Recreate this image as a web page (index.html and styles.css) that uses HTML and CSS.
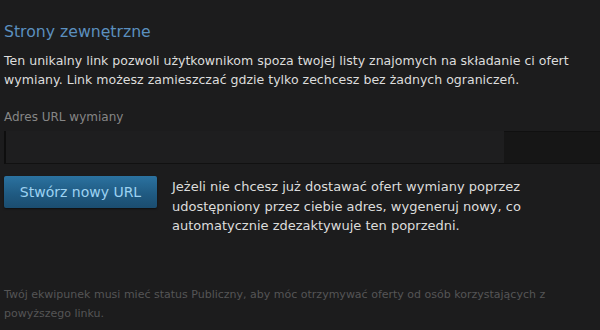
FILE: index.html
```html
<!DOCTYPE html>
<html lang="pl">
<head>
<meta charset="utf-8">
<link rel="stylesheet" href="styles.css">
</head>
<body>
<div class="panel">
  <h2 class="title">Strony zewnętrzne</h2>
  <p class="intro">Ten unikalny link pozwoli użytkownikom spoza twojej listy znajomych na składanie ci ofert wymiany. Link możesz zamieszczać gdzie tylko zechcesz bez żadnych ograniczeń.</p>
  <div class="label">Adres URL wymiany</div>
  <div class="url-field"><span class="url-input"></span><span class="url-end"></span></div>
  <div class="action-row">
    <button class="btn">Stwórz nowy URL</button>
    <p class="action-text">Jeżeli nie chcesz już dostawać ofert wymiany poprzez udostępniony przez ciebie adres, wygeneruj nowy, co automatycznie zdezaktywuje ten poprzedni.</p>
  </div>
  <p class="note">Twój ekwipunek musi mieć status Publiczny, aby móc otrzymywać oferty od osób korzystających z powyższego linku.</p>
</div>
</body>
</html>
```

FILE: styles.css
```css
html, body {
  margin: 0;
  padding: 0;
  background: #1c1c1d;
  width: 600px;
  height: 330px;
  overflow: hidden;
}
.panel {
  padding: 22px 0 0 4px;
  font-family: "DejaVu Sans", Verdana, sans-serif;
  color: #d6d6d6;
}
.title {
  margin: 0;
  font-size: 15.7px;
  font-weight: normal;
  color: #5b8fbf;
  line-height: 20px;
}
.intro {
  margin: 10px 0 0 0;
  font-size: 12.55px;
  line-height: 18.5px;
  color: #dcdcdc;
  width: 596px;
}
.label {
  margin-top: 21px;
  font-size: 12px;
  line-height: 15px;
  color: #868686;
}
.url-field {
  margin-top: 6px;
  height: 32px;
  display: flex;
  border-bottom: 1px solid #111;
  border-left: 2px solid #0e0e0e;
}
.url-input {
  flex: 1;
  background: #1e1e1f;
}
.url-end {
  width: 96px;
  background: #161616;
  border-top: 1px solid #101010;
}
.action-row {
  display: flex;
  align-items: flex-start;
  margin-top: 12px;
}
.btn {
  flex: none;
  width: 153px;
  height: 32px;
  border: none;
  border-radius: 2px;
  background: linear-gradient(to bottom, #2b72a0 0%, #1f5980 60%, #1b4d70 100%);
  color: #9dd2f2;
  font-family: "DejaVu Sans", Verdana, sans-serif;
  font-size: 14px;
  padding: 0;
  box-shadow: 0 1px 2px rgba(0,0,0,0.5);
}
.action-text {
  margin: 1px 0 0 15px;
  font-size: 13px;
  line-height: 19.5px;
  color: #dcdcdc;
  width: 360px;
}
.note {
  margin: 49px 0 0 0;
  font-size: 11px;
  line-height: 19px;
  color: #555556;
  width: 570px;
}
```
